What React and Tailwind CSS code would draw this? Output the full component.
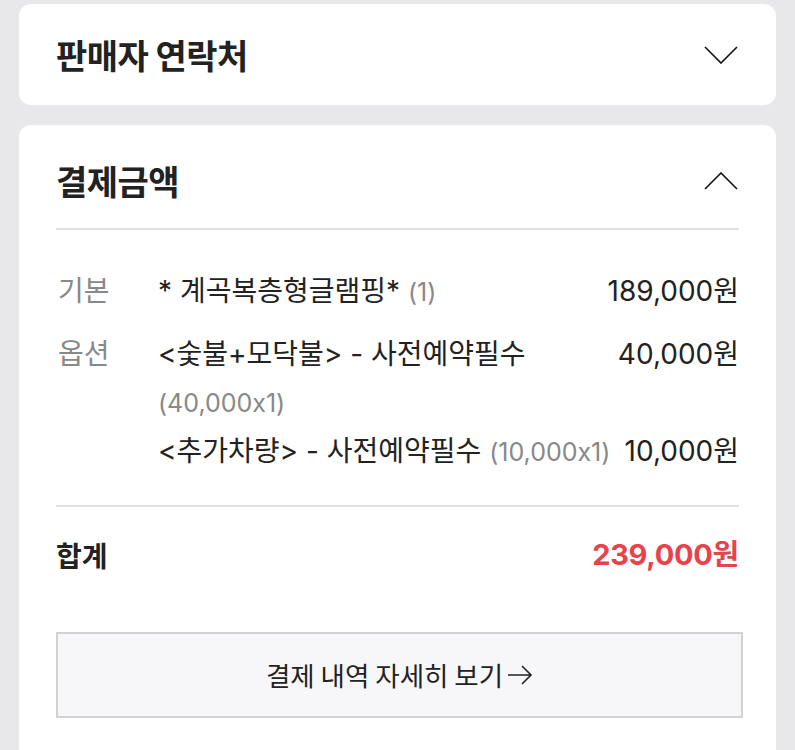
import React from "react";

const font = { fontFamily: '"Noto Sans CJK KR", "Noto Sans", sans-serif' };
const numFont = { fontFamily: 'Inter, "Noto Sans CJK KR", sans-serif' };

function ChevronDown() {
  return (
    <svg width="34" height="18" viewBox="0 0 34 18" fill="none">
      <path d="M1 1 L17 17 L33 1" stroke="#111" strokeWidth="1.6" />
    </svg>
  );
}
function ChevronUp() {
  return (
    <svg width="34" height="18" viewBox="0 0 34 18" fill="none">
      <path d="M1 17 L17 1 L33 17" stroke="#111" strokeWidth="1.6" />
    </svg>
  );
}
function Arrow() {
  return (
    <svg width="26" height="20" viewBox="0 0 26 20" fill="none" className="ml-[4px]">
      <path d="M1 10 H24 M15 1 L24 10 L15 19" stroke="#222" strokeWidth="1.6" />
    </svg>
  );
}

function Item({ name, qty, price }) {
  return (
    <div className="flex">
      <div className="flex-1">
        {name} <span className="text-[#888] text-[25px]">{qty}</span>
      </div>
      <div className="shrink-0 ml-[10px]">{price}</div>
    </div>
  );
}

export default function App() {
  return (
    <div className="min-h-[750px] bg-[#e8e8ea] px-[19px] pt-[4px] flex flex-col gap-[20px] overflow-hidden" style={font}>
      <div className="bg-white rounded-[12px] h-[101px] flex items-center justify-between pl-[37px] pr-[38px]">
        <div className="text-[34px] font-bold text-[#222] leading-none tracking-[-0.5px]">판매자 연락처</div>
        <ChevronDown />
      </div>
      <div className="bg-white rounded-t-[12px] px-[37px] pb-[40px]">
        <div className="h-[103px] flex items-center justify-between pr-[1px] pt-[8px]">
          <div className="text-[34px] font-bold text-[#222] leading-none tracking-[-0.5px]">결제금액</div>
          <ChevronUp />
        </div>
        <div className="h-[2px] bg-[#e0e0e0]"></div>
        <div className="pt-[37px] pb-[29px] flex flex-col gap-[14px] text-[28px] leading-[48px] text-[#222]" style={numFont}>
          <div className="flex">
            <div className="w-[102px] shrink-0 text-[#888] pl-[2px]">기본</div>
            <div className="flex-1 flex flex-col">
              <Item name="* 계곡복층형글램핑*" qty="(1)" price="189,000원" />
            </div>
          </div>
          <div className="flex">
            <div className="w-[102px] shrink-0 text-[#888] pl-[2px]">옵션</div>
            <div className="flex-1 flex flex-col">
              <Item name="<숯불+모닥불> - 사전예약필수" qty="(40,000x1)" price="40,000원" />
              <Item name="<추가차량> - 사전예약필수" qty="(10,000x1)" price="10,000원" />
            </div>
          </div>
        </div>
        <div className="h-[2px] bg-[#e0e0e0]"></div>
        <div className="h-[96px] flex items-center justify-between">
          <div className="text-[28px] font-bold text-[#222]">합계</div>
          <div className="text-[29px] font-bold text-[#e8434a] tracking-[-0.3px]" style={numFont}>239,000원</div>
        </div>
        <div className="mt-[29px] mr-[-4px] h-[86px] border-2 border-[#d2d2d4] bg-[#f7f7f9] flex items-center justify-center text-[26.5px] text-[#222]">
          <span>결제 내역 자세히 보기</span>
          <Arrow />
        </div>
      </div>
    </div>
  );
}
